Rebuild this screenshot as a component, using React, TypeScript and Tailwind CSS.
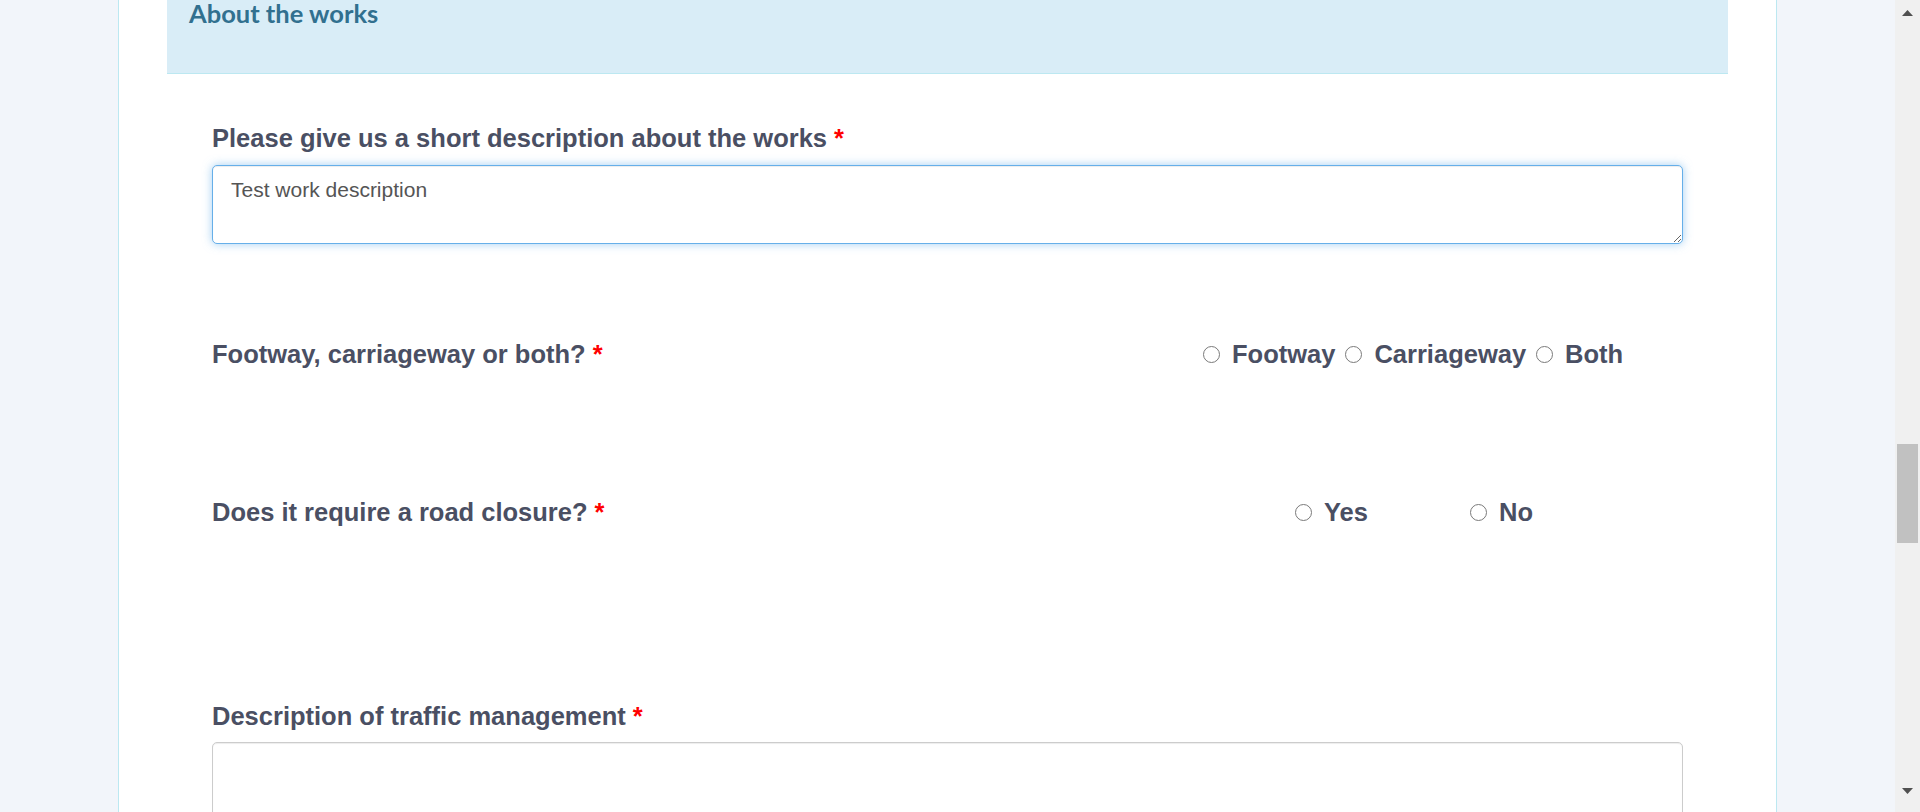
const labelText = "font-['Liberation_Sans',Arial,sans-serif] text-[25.5px] leading-[36px] font-bold text-[#4a4f63]";

const Required = () => <span className="text-[#ff0000]"> *</span>;

const Radio = ({ label }: { label: string }) => (
    <label className="flex items-center gap-[12px]">
        <span className="block w-[17px] h-[17px] rounded-full border-[1.5px] border-[#7a7a7a] bg-white" />
        <span className={labelText}>{label}</span>
    </label>
);

const TextArea = ({ value, focused }: { value?: string; focused?: boolean }) => (
    <textarea
        defaultValue={value}
        className={
            focused
                ? "block w-full h-[79px] rounded-[5px] border border-[#66afe9] bg-white pt-[9px] px-[18px] text-[21px] leading-[29px] text-[#555555] font-['Liberation_Sans',Arial,sans-serif] shadow-[inset_0_1px_1px_rgba(0,0,0,0.075),0_0_10px_rgba(102,175,233,0.6)] outline-none"
                : "block w-full h-[79px] rounded-[5px] border border-[#cccccc] bg-white pt-[9px] px-[18px] text-[21px] leading-[29px] text-[#555555] font-['Liberation_Sans',Arial,sans-serif] shadow-[inset_0_1px_1px_rgba(0,0,0,0.075)] outline-none"
        }
    />
);

const Scrollbar = () => (
    <div className="w-[25px] shrink-0 bg-[#f0f0f0] flex flex-col">
        <div className="h-[25px] flex items-center justify-center">
            <svg width="11" height="6" viewBox="0 0 11 6">
                <polygon points="5.5,0 11,6 0,6" fill="#505050" />
            </svg>
        </div>
        <div className="mt-[419px] mx-[2px] h-[99px] bg-[#c1c1c1]" />
        <div className="flex-1" />
        <div className="h-[25px] flex items-start justify-center pt-[1px]">
            <svg width="11" height="6" viewBox="0 0 11 6">
                <polygon points="0,0 11,0 5.5,6" fill="#505050" />
            </svg>
        </div>
    </div>
);

export default function App() {
    return (
        <div className="h-[812px] w-full flex overflow-hidden bg-[#f2f5fa]">
            <div className="w-[118px] shrink-0" />
            <div className="w-[1659px] shrink-0 bg-white border-x border-[#bce8f1] px-[48px]">
                <div className="h-[74px] bg-[#d9edf7] border-b border-[#bce8f1] pl-[22px]">
                    <h3 className="font-['Lato',sans-serif] font-bold text-[25.5px] leading-[26px] text-[#31708f]">
                        About the works
                    </h3>
                </div>

                <div className="px-[45px] pt-[46px]">
                    <div className={labelText + " mb-[9px]"}>
                        Please give us a short description about the works<Required />
                    </div>
                    <TextArea value="Test work description" focused />

                    <div className="mt-[92px] grid grid-cols-[991px_1fr] items-center">
                        <div className={labelText}>
                            Footway, carriageway or both?<Required />
                        </div>
                        <div className="flex items-center gap-[10px]">
                            <Radio label="Footway" />
                            <Radio label="Carriageway" />
                            <Radio label="Both" />
                        </div>
                    </div>

                    <div className="mt-[122px] grid grid-cols-[991px_1fr] items-center">
                        <div className={labelText}>
                            Does it require a road closure?<Required />
                        </div>
                        <div className="flex items-center pl-[92px]">
                            <div className="w-[175px]">
                                <Radio label="Yes" />
                            </div>
                            <Radio label="No" />
                        </div>
                    </div>

                    <div className={labelText + " mt-[168px] mb-[8px]"}>
                        Description of traffic management<Required />
                    </div>
                    <TextArea />
                </div>
            </div>
            <div className="flex-1" />
            <Scrollbar />
        </div>
    );
}
